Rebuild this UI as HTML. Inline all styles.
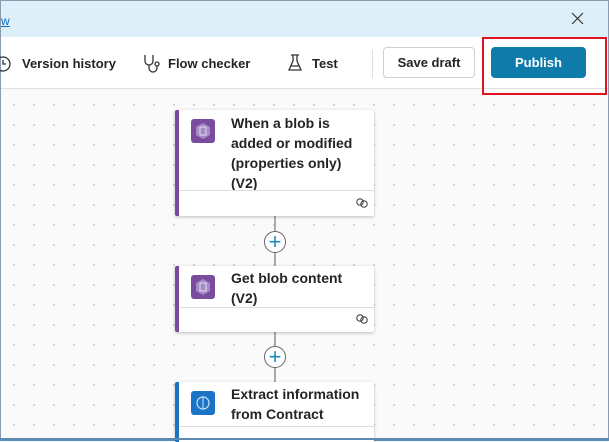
<!DOCTYPE html><html><head><style>
body{margin:0;width:609px;height:440px;overflow:hidden;font-family:"Liberation Sans",sans-serif;position:relative;background:#fff}
.a{position:absolute}
.frame{position:absolute;left:0;top:0;width:607px;height:438px;border:1px solid #8a9bb0;border-bottom:2px solid #5b8ab5}
.banner{left:1px;top:1px;width:607px;height:36px;background:#ddf0fa;border-bottom:1px solid #cfe3ee}
.tb{left:1px;top:37px;width:607px;height:51px;background:#fff;border-bottom:1px solid #e1e1e1}
.canvas{left:1px;top:89px;width:607px;height:349px;background-color:#fafafa;background-image:radial-gradient(circle,#bbb 0.7px,transparent 1px);background-size:20px 20px;background-position:3px 6px}
.t{font-size:13px;color:#242424;font-weight:bold}
.card{background:#fff;box-shadow:0 1px 3px rgba(0,0,0,.25);border-radius:2px}
.ct{font-size:14px;font-weight:bold;color:#242424;line-height:20px}
.ico{width:24px;height:24px;border-radius:3px}
.plus{width:20px;height:20px;border:1px solid #666;border-radius:50%;background:#fff;color:#1a8bb8;font-size:22px;line-height:19px;text-align:center}
</style></head><body>
<div class="frame"></div>
<div class="a banner"></div>
<div class="a" style="left:1px;top:14px;font-size:12px;color:#0f6cbd;text-decoration:underline">w</div>
<svg class="a" style="left:571px;top:12px" width="13" height="13"><path d="M1 1L12 12M12 1L1 12" stroke="#333" stroke-width="1.2"/></svg>
<div class="a tb"></div>
<svg class="a" style="left:-6px;top:55px" width="18" height="18"><circle cx="9" cy="9" r="7" fill="none" stroke="#333" stroke-width="1.3"/><path d="M9 5V9H12" fill="none" stroke="#333" stroke-width="1.3"/></svg>
<div class="a t" style="left:22px;top:56px">Version history</div>
<svg class="a" style="left:142px;top:53px" width="20" height="22"><path d="M3 2V8A4 4 0 0 0 11 8V2M7 12V15A4 4 0 0 0 15 15V13" fill="none" stroke="#333" stroke-width="1.3"/><circle cx="15" cy="11" r="2" fill="none" stroke="#333" stroke-width="1.3"/></svg>
<div class="a t" style="left:168px;top:56px">Flow checker</div>
<svg class="a" style="left:288px;top:54px" width="14" height="18"><path d="M3 1H11M5 1V7L1 16H13L9 7V1M3 12H11" fill="none" stroke="#333" stroke-width="1.3"/></svg>
<div class="a t" style="left:312px;top:56px">Test</div>
<div class="a" style="left:372px;top:50px;width:1px;height:28px;background:#ddd"></div>
<div class="a" style="left:383px;top:47px;width:92px;height:31px;border:1px solid #d1d1d1;border-radius:4px;box-sizing:border-box;text-align:center;line-height:29px" ><span class="t">Save draft</span></div>
<div class="a" style="left:491px;top:47px;width:95px;height:31px;background:#0e7bab;border-radius:4px;text-align:center;line-height:31px;color:#fff;font-weight:bold;font-size:13px">Publish</div>
<div class="a canvas"></div>
<div class="a" style="left:482px;top:37px;width:121px;height:54px;border:2px solid #e0141e"></div>
<!-- connectors -->
<div class="a" style="left:274px;top:216px;width:2px;height:50px;background:#aaa"></div>
<div class="a" style="left:274px;top:332px;width:2px;height:50px;background:#aaa"></div>
<div class="a plus" style="left:264px;top:231px">+</div>
<div class="a plus" style="left:264px;top:346px">+</div>
<!-- card1 -->
<div class="a card" style="left:175px;top:110px;width:199px;height:106px;border-left:4px solid #7a4a9a;box-sizing:border-box">
<div class="a ico" style="left:12px;top:9px;background:#7b4c9d"><svg width="24" height="24"><polygon points="12,4 19,8 19,16 12,20 5,16 5,8" fill="#a58bc4"/><rect x="9" y="8" width="6" height="8" fill="none" stroke="#e5dcef" stroke-width="1"/></svg></div>
<div class="a ct" style="left:52px;top:3px">When a blob is<br>added or modified<br>(properties only)<br>(V2)</div>
<div class="a" style="left:0;top:80px;width:195px;height:1px;background:#ddd"></div>
<svg class="a" style="left:176px;top:88px" width="14" height="10"><circle cx="5" cy="4" r="3.2" fill="none" stroke="#444" stroke-width="1.1"/><circle cx="9" cy="6" r="3.2" fill="none" stroke="#444" stroke-width="1.1"/></svg>
</div>
<!-- card2 -->
<div class="a card" style="left:175px;top:266px;width:199px;height:66px;border-left:4px solid #7a4a9a;box-sizing:border-box">
<div class="a ico" style="left:12px;top:9px;background:#7b4c9d"><svg width="24" height="24"><polygon points="12,4 19,8 19,16 12,20 5,16 5,8" fill="#a58bc4"/><rect x="9" y="8" width="6" height="8" fill="none" stroke="#e5dcef" stroke-width="1"/></svg></div>
<div class="a ct" style="left:52px;top:2px">Get blob content<br>(V2)</div>
<div class="a" style="left:0;top:41px;width:195px;height:1px;background:#ddd"></div>
<svg class="a" style="left:176px;top:48px" width="14" height="10"><circle cx="5" cy="4" r="3.2" fill="none" stroke="#444" stroke-width="1.1"/><circle cx="9" cy="6" r="3.2" fill="none" stroke="#444" stroke-width="1.1"/></svg>
</div>
<!-- card3 -->
<div class="a card" style="left:175px;top:382px;width:199px;height:60px;border-left:4px solid #1a73c4;box-sizing:border-box">
<div class="a ico" style="left:12px;top:9px;background:#1a73c4"><svg width="24" height="24"><circle cx="12" cy="12" r="6" fill="none" stroke="#cfe3f6" stroke-width="1.2"/><path d="M12 6V18" stroke="#cfe3f6"/></svg></div>
<div class="a ct" style="left:52px;top:2px">Extract information<br>from Contract</div>
<div class="a" style="left:0;top:44px;width:195px;height:1px;background:#ddd"></div>
</div>
<div class="a" style="left:0;top:438px;width:609px;height:2px;background:#5b8ab5"></div>
</body></html>
